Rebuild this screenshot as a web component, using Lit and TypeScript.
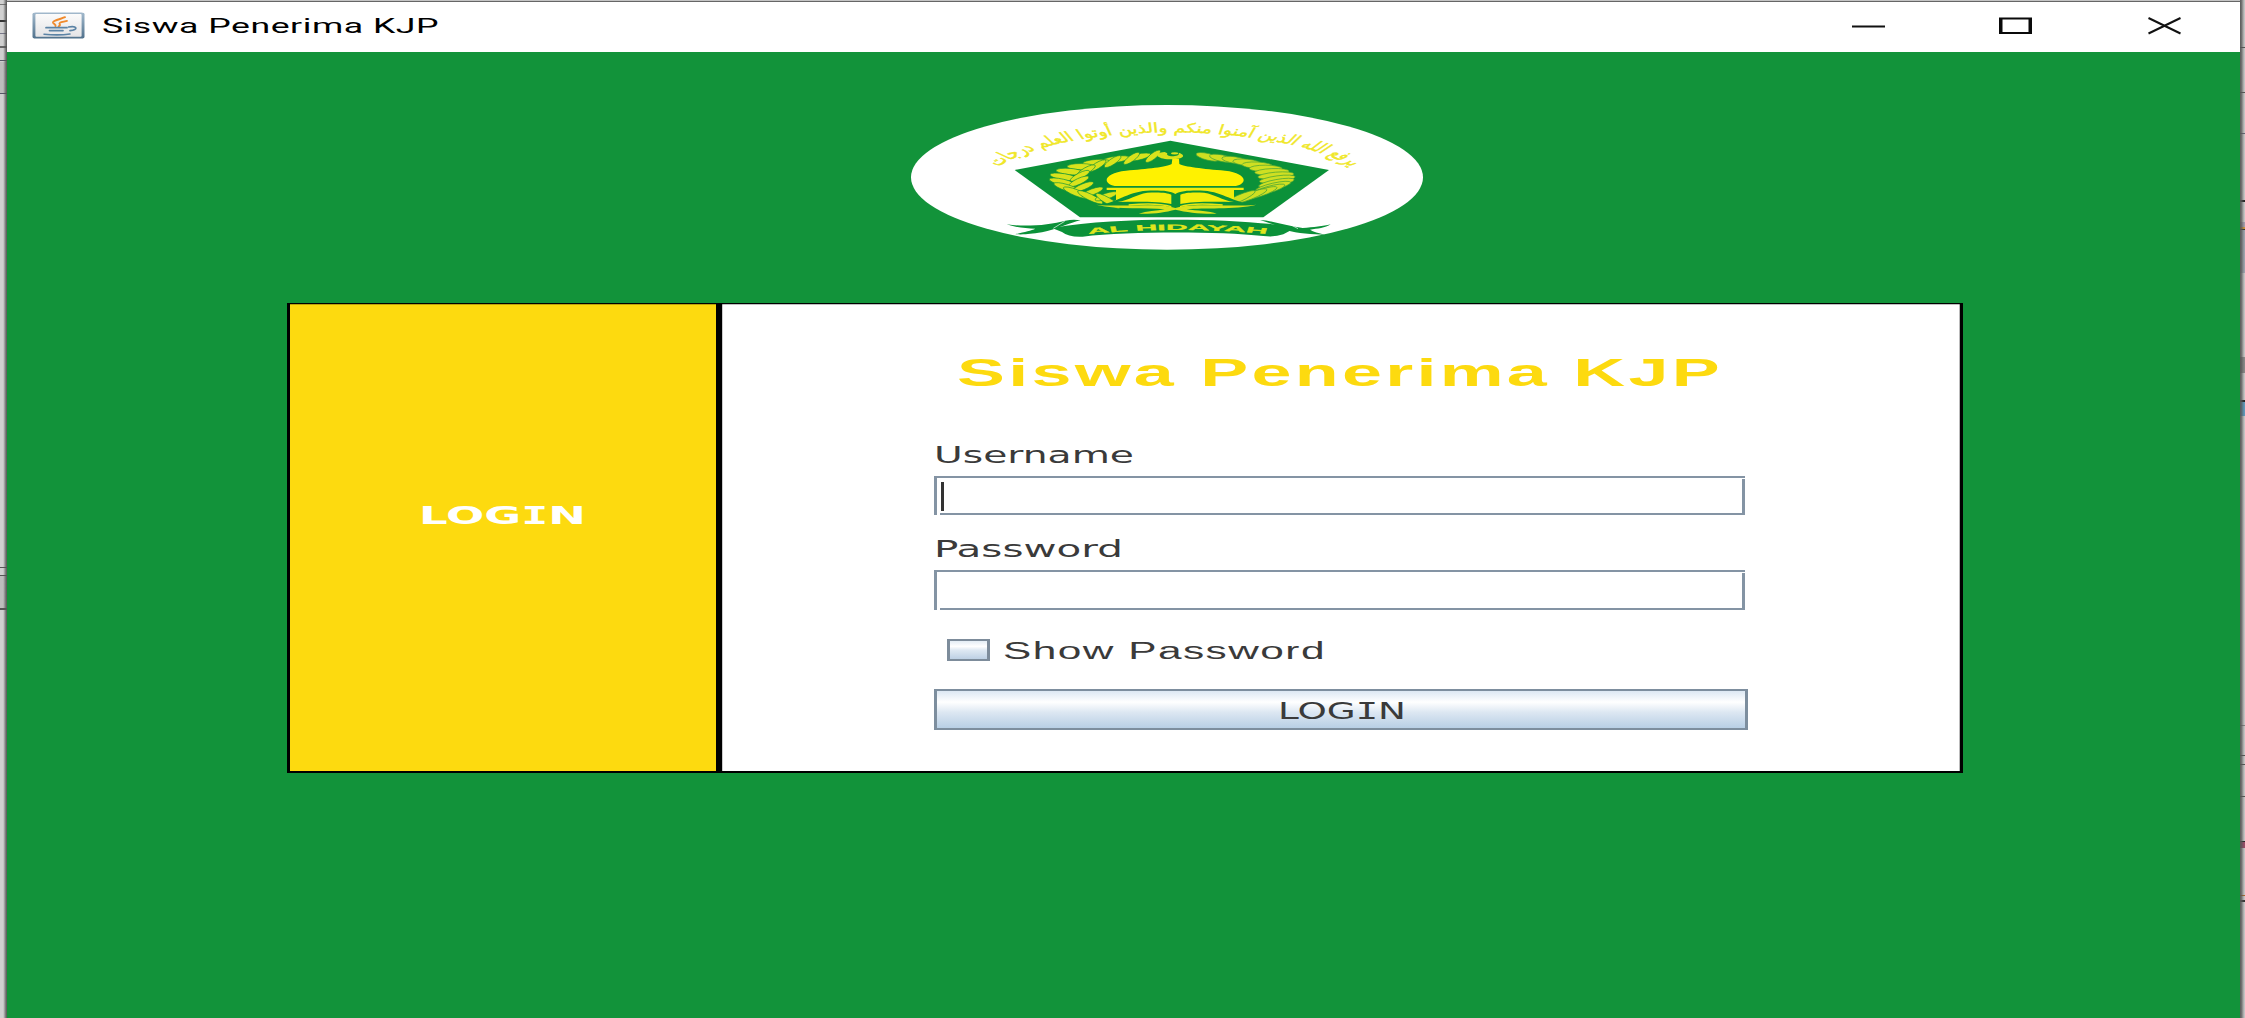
import { LitElement, html, css, svg } from "lit";
import { customElement } from "lit/decorators.js";

interface LabelSpec {
  text: unknown;
  width: number;
  height: number;
  baseline: number;
  size: number;
  fill: string;
  family?: string;
  weight?: number;
  spacing?: number;
}

/** One line of text set to an exact width, the glyphs widened to fill it. */
const wideLabel = (l: LabelSpec) => html`
  <svg class="label" width=${l.width} height=${l.height}>
    <text
      x="0"
      y=${l.baseline}
      textLength=${l.width}
      lengthAdjust="spacingAndGlyphs"
      letter-spacing=${l.spacing ?? 0}
      font-family=${l.family ?? "'DejaVu Sans', sans-serif"}
      font-size=${l.size}
      font-weight=${l.weight ?? 400}
      fill=${l.fill}
    >${l.text}</text>
  </svg>
`;

/** "LOGIN" with a serifed capital I. */
const loginWord = svg`LOG<tspan font-family="'DejaVu Sans Mono', monospace">I</tspan>N`;

@customElement("java-icon")
class JavaIcon extends LitElement {
  static styles = css`
    :host { display: block; width: 53px; height: 27px; }
    svg { display: block; }
  `;
  render() {
    return html`
      <svg width="53" height="27" viewBox="0 0 53 27">
        <defs>
          <linearGradient id="rim" x1="0" y1="0" x2="0" y2="1">
            <stop offset="0" stop-color="#a3bacd" />
            <stop offset="1" stop-color="#50718c" />
          </linearGradient>
          <linearGradient id="face" x1="0" y1="0" x2="0" y2="1">
            <stop offset="0" stop-color="#fbfbfb" />
            <stop offset="1" stop-color="#e4e4e6" />
          </linearGradient>
        </defs>
        <rect x="0.5" y="0.5" width="52" height="26" rx="3" ry="1.8" fill="url(#rim)" />
        <rect x="3.4" y="2" width="46.2" height="22.8" rx="1" fill="url(#face)" />
        <g fill="none" stroke="#f08a2c" stroke-linecap="round">
          <path d="M33 5.2C30 6.6 20.500 8.500 21 10.500C21.500 12 24 12.500 23.500 14" stroke-width="2" />
          <path d="M35 8.800C31 9.500 26.500 10.800 27.500 12C28.500 13 28 13.500 26.500 14.400" stroke-width="1.800" />
        </g>
        <g fill="none" stroke="#5b83a5" stroke-linecap="round">
          <path d="M14 15.700H35" stroke-width="1.700" />
          <path d="M17.500 18.600H31" stroke-width="1.700" />
          <path d="M36.500 15C45 13.500 47 17.500 38 18.700" stroke-width="1.700" />
          <path d="M12 22.200C20 23 31 23 38 22" stroke-width="1.600" />
        </g>
      </svg>
    `;
  }
}

/** Left ear of the wreath: leaf pairs along an elliptical arc. */
const leaves = () => {
  const out = [];
  const n = 11;
  for (let i = 0; i < n; i++) {
    const t = i / (n - 1);
    const a = ((106 + t * 130) * Math.PI) / 180;
    const cx = 432 + 308 * Math.cos(a);
    const cy = 239 - 73 * Math.sin(a);
    const outer = -12 + t * 42;
    const inner = -38 + t * 22;
    out.push(svg`
      <ellipse cx=${cx - 26} cy=${cy + 3} rx="42" ry="9.500" transform=${`rotate(${outer} ${cx - 26} ${cy + 3})`} />
      <ellipse cx=${cx + 22} cy=${cy} rx=${28 + t * 8} ry="9" transform=${`rotate(${inner} ${cx + 22} ${cy})`} />
    `);
  }
  return out;
};

/** Right ear of the wreath: overlapping slanted grains. */
const grains = () => {
  const out = [];
  const n = 15;
  for (let i = 0; i < n; i++) {
    const t = i / (n - 1);
    const a = ((72 - t * 124) * Math.PI) / 180;
    const cx = 440 + 302 * Math.cos(a);
    const cy = 239 - 72 * Math.sin(a);
    const rx = 36 + Math.min(i, 7) * 2.6;
    const deg = 14 - t * 38;
    out.push(svg`
      <ellipse cx=${cx} cy=${cy} rx=${rx} ry="10" transform=${`rotate(${deg} ${cx} ${cy})`} />
    `);
  }
  return out;
};

@customElement("school-emblem")
class SchoolEmblem extends LitElement {
  static styles = css`
    :host { display: block; width: 512px; height: 145px; }
    svg { display: block; }
  `;
  render() {
    return html`
      <svg width="512" height="145" viewBox="-357 15 1536 435" preserveAspectRatio="none">
        <defs>
          <path id="motto-arc" d="M-46 202C50 62 350 62 460 202" />
          <path id="name-arc" d="M79 403Q208 377 343 403" />
        </defs>
        <ellipse cx="411" cy="232" rx="768" ry="217" fill="#fff" />

        <g transform="scale(2.100 1)">
          <text font-family="'DejaVu Sans', sans-serif" font-size="40" fill="#f0e728" stroke="#f0e728" stroke-width="1.200" text-anchor="middle">
            <textPath href="#motto-arc" startOffset="50%" textLength="562" lengthAdjust="spacingAndGlyphs">يرفع الله الذين آمنوا منكم والذين أوتوا العلم درجات</textPath>
          </text>
        </g>

        <path d="M421 122L897 210L700 352H150L-46 210Z" fill="#0b9139" />

        <g fill="#d9e31c" stroke="#0b9139" stroke-width="1.800">${leaves()}</g>
        <g fill="#cfdf22" stroke="#3fa235" stroke-width="2">${grains()}</g>

        <path d="M404 156C370 158 376 177 420 178C455 178 474 168 446 158C454 171 404 173 412 160Z" fill="#d9e31c" />
        <ellipse cx="434" cy="160" rx="11" ry="3.500" fill="#d9e31c" />
        <path d="M427 176H447L448 192C462 200 520 207 585 212C622 216 641 228 641 240C641 250 628 258 612 258H260C244 258 230 250 230 240C230 228 250 216 288 212C350 207 412 201 425 192Z" fill="#fff200" />
        <path d="M230 263H641V270H612V300H258V270H230Z" fill="#f2ec0a" />

        <path d="M198 316C260 310 290 276 350 272C392 271 420 272 436 282C452 272 482 271 522 272C580 276 610 308 680 316L640 322C580 316 480 322 436 330C392 322 300 316 240 322Z" fill="#0b9139" />
        <path d="M262 306C300 300 318 283 352 278C390 276 412 278 424 284V312C390 304 320 304 262 306Z" fill="#f4ee0a" />
        <path d="M612 306C574 300 556 283 522 278C484 276 464 278 451 284V312C484 304 554 304 612 306Z" fill="#f4ee0a" />
        <path d="M198 314C270 322 380 308 436 324C492 308 600 322 680 314C610 330 520 322 470 328C500 332 540 334 560 341C510 342 470 337 436 329C404 337 374 342 326 341C350 334 380 332 404 328C350 322 268 330 198 314Z" fill="#d9e31c" />
        <path d="M296 315C350 310 400 313 424 320M578 315C520 310 470 313 450 320" fill="none" stroke="#e8e712" stroke-width="4" />

        <g fill="#0b9139">
          <path d="M66 384C180 364 300 359 432 359C568 359 700 366 800 382L760 403Q735 412 700 408C560 394 300 394 158 410Q116 412 96 396Z" />
          <path d="M-70 373C-10 382 60 374 106 362Q130 357 152 361C120 368 80 388 36 397C0 402 -10 404 -44 403C-16 395 4 392 16 386C-14 386 -50 381 -70 373Z" />
          <path d="M690 360C730 362 770 378 818 384C850 382 880 379 902 373C886 384 862 386 840 389C850 395 866 399 884 404C850 404 800 400 770 391C750 380 722 370 690 360Z" />
        </g>
        <path d="M70 385L104 364M770 368L804 386" stroke="#fff" stroke-width="2" />
        <g transform="scale(2.100 1)">
          <text font-family="'Liberation Sans', sans-serif" font-weight="700" font-size="24" fill="#e0e51c" stroke="#e0e51c" stroke-width="0.600" text-anchor="middle">
            <textPath href="#name-arc" startOffset="50%" textLength="256" lengthAdjust="spacingAndGlyphs">AL HIDAYAH</textPath>
          </text>
        </g>
      </svg>
    `;
  }
}

@customElement("title-bar")
class TitleBar extends LitElement {
  static styles = css`
    :host {
      display: flex;
      align-items: flex-start;
      height: 50px;
      background: #fff;
      padding: 10px 58px 0 25px;
      box-sizing: border-box;
    }
    .label { display: block; overflow: visible; }
    .caption { margin-left: 17px; }
    .controls { display: flex; gap: 114px; margin: 3px 0 0 auto; }
    .controls svg { display: block; }
    .controls .close { margin-left: 1px; }
  `;
  render() {
    return html`
      <java-icon></java-icon>
      <div class="caption">
        ${wideLabel({ text: "Siswa Penerima KJP", width: 337, height: 30, baseline: 21, size: 20.5, fill: "#000", family: "Roboto, sans-serif", spacing: 0.3 })}
      </div>
      <div class="controls">
        <svg width="33" height="20"><path d="M0 11.500H33" stroke="#111" stroke-width="2" /></svg>
        <svg width="33" height="20">
          <path d="M0 2.500H33V19H0Z M3.500 4.500V17H29.500V4.500Z" fill="#0a0a0a" fill-rule="evenodd" />
        </svg>
        <svg class="close" width="35" height="20" viewBox="-1 0 35 20">
          <path d="M0.500 3L32.500 18.500M32.500 3L0.500 18.500" stroke="#111" stroke-width="2" />
        </svg>
      </div>
    `;
  }
}

@customElement("login-card")
class LoginCard extends LitElement {
  static styles = css`
    :host {
      display: grid;
      grid-template-columns: 426px 6px 1fr;
      width: 1676px;
      height: 470px;
      box-sizing: border-box;
      border: solid #000;
      border-width: 1px 3px 2px 3px;
    }
    .label { display: block; overflow: visible; }
    .side {
      background: #fdda0f;
      display: flex;
      justify-content: center;
      padding: 196px 1px 0 0;
      box-shadow: inset 0 1px 0 rgba(0, 0, 0, 0.25);
    }
    .divider { background: #000; }
    .panel {
      background: #fff;
      padding: 46px 0 0 212px;
      box-shadow: inset 0 1px 0 rgba(0, 0, 0, 0.25), inset -1px 0 0 #bbb, inset 1px 0 0 #ccc;
    }
    .heading { margin-left: 23px; }
    .first { margin-top: 40px; }
    .second { margin-top: 18px; }
    .field {
      position: relative;
      box-sizing: border-box;
      width: 811px;
      height: 39px;
      margin-top: 6px;
      border: solid #8494a4;
      border-width: 2px 3px 2px 3px;
      display: flex;
      padding: 4px 0 0 4px;
    }
    .field::before,
    .field::after {
      content: "";
      position: absolute;
      background: #fff;
      width: 3px;
      height: 2px;
    }
    .field::before { top: 0; right: -3px; height: 1px; }
    .field::after { bottom: -2px; left: 0; }
    .tall { height: 40px; margin-top: 7px; }
    .caret { width: 3px; height: 29px; background: #333; }
    .check { display: flex; gap: 13px; margin: 29px 0 0 13px; height: 22px; }
    .box {
      box-sizing: border-box;
      width: 43px;
      height: 22px;
      border: solid #7d8c9b;
      border-width: 2px 3px;
      background: linear-gradient(#e4edf5, #fff 30%, #dfe9f3 50%, #bdd0e4);
    }
    .submit {
      box-sizing: border-box;
      width: 814px;
      height: 41px;
      margin-top: 28px;
      border: solid #7d8e9e;
      border-width: 2px 3px;
      background: linear-gradient(#dde8f3, #fff 30%, #dce7f2 58%, #b8cfe5);
      display: flex;
      justify-content: center;
      padding: 7px 0 0 2px;
    }
  `;
  render() {
    const ink = "#3a3a3a";
    return html`
      <div class="side">
        ${wideLabel({ text: loginWord, width: 167, height: 30, baseline: 23.7, size: 24.5, fill: "#fff", weight: 700 })}
      </div>
      <div class="divider"></div>
      <div class="panel">
        <div class="heading">
          ${wideLabel({ text: "Siswa Penerima KJP", width: 766, height: 50, baseline: 36.2, size: 39, fill: "#fdda0f", weight: 700, family: "'Liberation Sans', sans-serif", spacing: 1.8 })}
        </div>
        <div class="first">
          ${wideLabel({ text: "Username", width: 200, height: 30, baseline: 22.7, size: 22.5, fill: ink })}
        </div>
        <div class="field"><div class="caret"></div></div>
        <div class="second">
          ${wideLabel({ text: "Password", width: 189, height: 30, baseline: 23.7, size: 22.5, fill: ink })}
        </div>
        <div class="field tall"></div>
        <div class="check">
          <div class="box"></div>
          ${wideLabel({ text: "Show Password", width: 323, height: 22, baseline: 20, size: 23, fill: ink, family: "'Liberation Sans', sans-serif", spacing: 0.8 })}
        </div>
        <div class="submit">
          ${wideLabel({ text: loginWord, width: 128, height: 30, baseline: 20.5, size: 22.5, fill: ink })}
        </div>
      </div>
    `;
  }
}

/** Sliver of the desktop visible beside the window: top, height, colour of each mark. */
type Mark = [number, number, string];
const LEFT_MARKS: Mark[] = [
  [4, 1, "#777"], [20, 2, "#333"], [33, 1, "#778"], [46, 2, "#666"], [60, 1, "#556"], [62, 31, "#bdbdbd"], [93, 1, "#556"],
  [567, 1, "#555"], [575, 1, "#555"], [576, 32, "#bdbdbd"], [608, 2, "#555"],
];
const RIGHT_MARKS: Mark[] = [
  [47, 1, "#555"], [92, 1, "#555"], [133, 1, "#667"], [200, 2, "#222"], [222, 5, "#a9a3b5"], [227, 2, "#d79a3a"], [229, 1, "#333"],
  [230, 43, "#a3abb5"], [357, 16, "#8d8d8d"], [400, 2, "#222"], [402, 14, "#5f9fc4"], [725, 1, "#888"], [755, 1, "#555"],
  [764, 1, "#555"], [796, 1, "#555"], [841, 1, "#222"], [842, 6, "#a04a6a"], [895, 1, "#b06a2a"], [900, 2, "#333"],
];
const strip = (marks: Mark[]) => svg`${marks.map(([y, h, c]) => svg`<rect x="0" y=${y} width="7" height=${h} fill=${c} />`)}`;

@customElement("app-root")
class AppRoot extends LitElement {
  static styles = css`
    :host {
      display: grid;
      grid-template-columns: 7px 1fr 5px;
      width: 2245px;
      height: 1018px;
      overflow: hidden;
      background: #d0d0d0;
    }
    .edge svg { display: block; }
    .window {
      display: flex;
      flex-direction: column;
      border-top: 1px solid #c4c4c4;
      box-shadow: inset 0 1px 0 #666;
      padding-top: 1px;
    }
    .content {
      flex: 1;
      background: #12933a;
      display: flex;
      flex-direction: column;
      padding: 53px 0 0 280px;
      gap: 53px;
    }
    school-emblem { margin-left: 624px; }
  `;
  render() {
    return html`
      <div class="edge">
        <svg width="7" height="1018">
          <defs><linearGradient id="l"><stop offset="0.450" stop-color="#555" stop-opacity="0" /><stop offset="0.900" stop-color="#555" stop-opacity="0.900" /></linearGradient></defs>
          ${strip(LEFT_MARKS)}
          <rect width="7" height="1018" fill="url(#l)" />
        </svg>
      </div>
      <div class="window">
        <title-bar></title-bar>
        <div class="content">
          <school-emblem></school-emblem>
          <login-card></login-card>
        </div>
      </div>
      <div class="edge">
        <svg width="5" height="1018">
          <defs><linearGradient id="r"><stop offset="0.200" stop-color="#555" stop-opacity="0.900" /><stop offset="0.850" stop-color="#555" stop-opacity="0.100" /></linearGradient></defs>
          ${strip(RIGHT_MARKS)}
          <rect width="5" height="1018" fill="url(#r)" />
        </svg>
      </div>
    `;
  }
}
